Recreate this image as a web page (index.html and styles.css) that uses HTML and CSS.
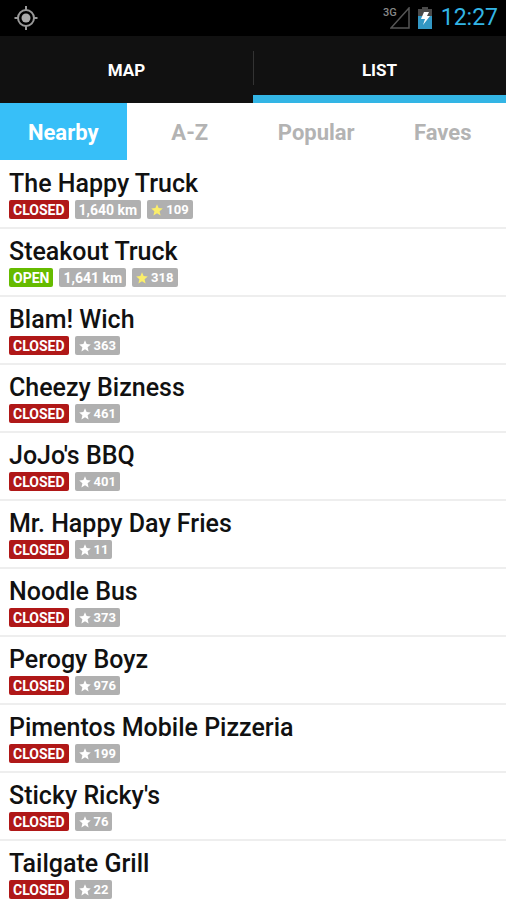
FILE: index.html
```html
<!DOCTYPE html>
<html lang="en">
<head>
    <meta charset="utf-8">
    <meta name="viewport" content="width=device-width, initial-scale=1">
    <title>Food Trucks</title>
    <link rel="stylesheet" href="styles.css">
</head>
<body>
    <svg class="sprite" aria-hidden="true">
        <symbol id="star" viewBox="0 0 12 12">
            <path d="M6 0.3 L7.6 4.1 L11.8 4.5 L8.6 7.2 L9.6 11.4 L6 9.2 L2.4 11.4 L3.4 7.2 L0.2 4.5 L4.4 4.1 Z"/>
        </symbol>
    </svg>

    <div class="status-bar">
        <svg class="gps-icon" viewBox="0 0 24 24" aria-hidden="true">
            <circle cx="12" cy="12" r="8" fill="none" stroke="#999" stroke-width="2"/>
            <circle cx="12" cy="12" r="4.5" fill="#aaa"/>
            <path d="M12 0v5M12 19v5M0.5 12h4.5M19 12h4.5" stroke="#999" stroke-width="2"/>
        </svg>
        <div class="status-right">
            <span class="network">3G</span>
            <svg class="signal-icon" viewBox="0 0 20 22" aria-hidden="true">
                <path d="M1 21 L19 1 V21 Z" fill="none" stroke="#555" stroke-width="1.5"/>
            </svg>
            <svg class="battery-icon" viewBox="0 0 16 22" aria-hidden="true">
                <path d="M5 0h6v2h4v8H1V2h4z" fill="#4a4a4a"/>
                <path d="M1 9h14v13H1z" fill="#3297c4"/>
                <path d="M7 5h5l-2 4h3l-7 9 2-6H4z" fill="#fff"/>
            </svg>
            <span class="clock">12:27</span>
        </div>
    </div>

    <nav class="main-tabs">
        <button class="main-tab">MAP</button>
        <button class="main-tab active">LIST</button>
    </nav>

    <nav class="sort-tabs">
        <button class="sort-tab active">Nearby</button>
        <button class="sort-tab">A-Z</button>
        <button class="sort-tab">Popular</button>
        <button class="sort-tab">Faves</button>
    </nav>

    <ul class="truck-list">
        <li class="truck">
            <h2>The Happy Truck</h2>
            <div class="badges">
                <span class="badge closed">CLOSED</span>
                <span class="badge">1,640 km</span>
                <span class="badge likes faved"><svg class="star"><use href="#star"/></svg>109</span>
            </div>
        </li>
        <li class="truck">
            <h2>Steakout Truck</h2>
            <div class="badges">
                <span class="badge open">OPEN</span>
                <span class="badge">1,641 km</span>
                <span class="badge likes faved"><svg class="star"><use href="#star"/></svg>318</span>
            </div>
        </li>
        <li class="truck">
            <h2>Blam! Wich</h2>
            <div class="badges">
                <span class="badge closed">CLOSED</span>
                <span class="badge likes"><svg class="star"><use href="#star"/></svg>363</span>
            </div>
        </li>
        <li class="truck">
            <h2>Cheezy Bizness</h2>
            <div class="badges">
                <span class="badge closed">CLOSED</span>
                <span class="badge likes"><svg class="star"><use href="#star"/></svg>461</span>
            </div>
        </li>
        <li class="truck">
            <h2>JoJo's BBQ</h2>
            <div class="badges">
                <span class="badge closed">CLOSED</span>
                <span class="badge likes"><svg class="star"><use href="#star"/></svg>401</span>
            </div>
        </li>
        <li class="truck">
            <h2>Mr. Happy Day Fries</h2>
            <div class="badges">
                <span class="badge closed">CLOSED</span>
                <span class="badge likes"><svg class="star"><use href="#star"/></svg>11</span>
            </div>
        </li>
        <li class="truck">
            <h2>Noodle Bus</h2>
            <div class="badges">
                <span class="badge closed">CLOSED</span>
                <span class="badge likes"><svg class="star"><use href="#star"/></svg>373</span>
            </div>
        </li>
        <li class="truck">
            <h2>Perogy Boyz</h2>
            <div class="badges">
                <span class="badge closed">CLOSED</span>
                <span class="badge likes"><svg class="star"><use href="#star"/></svg>976</span>
            </div>
        </li>
        <li class="truck">
            <h2>Pimentos Mobile Pizzeria</h2>
            <div class="badges">
                <span class="badge closed">CLOSED</span>
                <span class="badge likes"><svg class="star"><use href="#star"/></svg>199</span>
            </div>
        </li>
        <li class="truck">
            <h2>Sticky Ricky's</h2>
            <div class="badges">
                <span class="badge closed">CLOSED</span>
                <span class="badge likes"><svg class="star"><use href="#star"/></svg>76</span>
            </div>
        </li>
        <li class="truck">
            <h2>Tailgate Grill</h2>
            <div class="badges">
                <span class="badge closed">CLOSED</span>
                <span class="badge likes"><svg class="star"><use href="#star"/></svg>22</span>
            </div>
        </li>
    </ul>
</body>
</html>
```

FILE: styles.css
```css
* {
    box-sizing: border-box;
}
html {
    scrollbar-width: none;
}
body {
    margin: 0;
    background: white;
    color: #111;
    font-family: Roboto, "Liberation Sans", sans-serif;
}
button {
    padding: 0;
    border: none;
    background: none;
    font-family: inherit;
    cursor: pointer;
}
.sprite {
    display: none;
}

/* Status bar */
.status-bar {
    display: flex;
    align-items: center;
    justify-content: space-between;
    height: 36px;
    padding: 0 8px 0 14px;
    background: #000;
}
.gps-icon {
    width: 24px;
    height: 24px;
}
.status-right {
    display: flex;
    align-items: center;
}
.network {
    align-self: flex-start;
    margin-top: 7px;
    color: #888;
    font-size: 11px;
    font-weight: 500;
    line-height: 12px;
}
.signal-icon {
    width: 20px;
    height: 22px;
    margin-left: -7px;
}
.battery-icon {
    width: 16px;
    height: 22px;
    margin: 0 8px 0 7px;
}
.clock {
    color: #33b5e5;
    font-size: 23px;
    line-height: 36px;
}

/* Map / list switch */
.main-tabs {
    display: flex;
    height: 67px;
    background: #111;
}
.main-tab {
    flex: 1;
    border-bottom: 8px solid #111;
    padding-top: 8px;
    color: white;
    font-size: 17px;
    font-weight: 700;
}
.main-tab.active {
    border-bottom-color: #33b5e5;
    background: linear-gradient(#333, #333) 0 15px / 1px 34px no-repeat;
}

/* Sort tabs */
.sort-tabs {
    display: flex;
    height: 57px;
}
.sort-tab {
    flex: 1;
    padding-top: 2px;
    color: #b3b3b3;
    font-size: 22px;
    font-weight: 700;
}
.sort-tab.active {
    background: #37bff8;
    color: white;
}

/* Trucks */
.truck-list {
    margin: 0;
    padding: 1px 0 0;
    list-style: none;
}
.truck {
    height: 68px;
    padding: 8px 9px 0;
    border-bottom: 2px solid #eee;
}
.truck h2 {
    margin: 0;
    font-size: 25px;
    font-weight: 500;
    line-height: 30px;
}
.badges {
    display: flex;
    gap: 6px;
    margin-top: 1px;
}
.badge {
    display: flex;
    align-items: center;
    height: 19px;
    padding: 0 4px;
    border-radius: 2px;
    background: #b0b0b0;
    color: white;
    font-size: 14px;
    font-weight: 700;
}
.badge.closed {
    background: #b01818;
}
.badge.open {
    background: #66bb00;
}
.badge.likes {
    gap: 3px;
    font-size: 13px;
}
.star {
    width: 12px;
    height: 12px;
    fill: white;
}
.faved .star {
    fill: #fbee6a;
}
```
